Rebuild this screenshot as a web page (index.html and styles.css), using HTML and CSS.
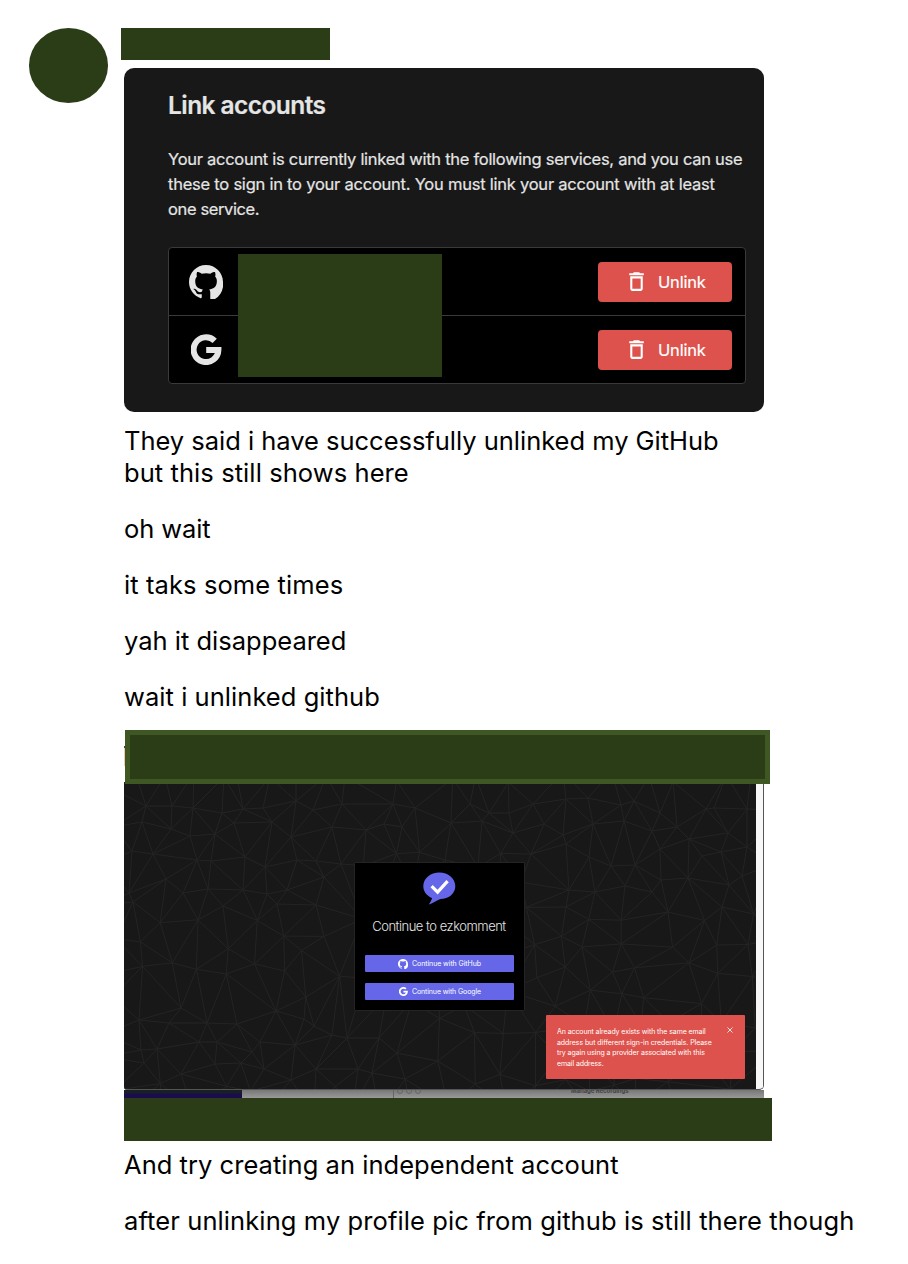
FILE: index.html
```html
<!DOCTYPE html>
<html lang="en">
<head>
<meta charset="utf-8">
<title>Conversation</title>
<link rel="stylesheet" href="styles.css">
</head>
<body>
<svg class="defs" width="0" height="0">
  <symbol id="github" viewBox="0 0 16 16"><path fill="currentColor" d="M8 0C3.58 0 0 3.58 0 8c0 3.54 2.29 6.53 5.47 7.59.4.07.55-.17.55-.38 0-.19-.01-.82-.01-1.49-2.01.37-2.53-.49-2.69-.94-.09-.23-.48-.94-.82-1.13-.28-.15-.68-.52-.01-.53.63-.01 1.08.58 1.23.82.72 1.21 1.87.87 2.33.66.07-.52.28-.87.51-1.07-1.78-.2-3.64-.89-3.64-3.95 0-.87.31-1.59.82-2.15-.08-.2-.36-1.02.08-2.12 0 0 .67-.21 2.2.82.64-.18 1.32-.27 2-.27s1.36.09 2 .27c1.53-1.04 2.2-.82 2.2-.82.44 1.1.16 1.92.08 2.12.51.56.82 1.27.82 2.15 0 3.07-1.87 3.75-3.65 3.95.29.25.54.73.54 1.48v3.900A8.01 8.01 0 0 0 16 8c0-4.42-3.58-8-8-8z"/></symbol>
  <symbol id="google" viewBox="0 0 31 31"><path fill="none" stroke="currentColor" stroke-width="6" d="M23.7 6.8A12.4 12.4 0 1 0 27.4 15.9H15.2"/></symbol>
  <symbol id="trash" viewBox="0 0 24 24"><path fill="currentColor" d="M6 19c0 1.1.9 2 2 2h8c1.1 0 2-.9 2-2V7H6v12zM8 9h8v10H8V9zm7.5-5l-1-1h-5l-1 1H5v2h14V4h-3.5z"/></symbol>
</svg>
<main class="thread">
  <div class="avatar"></div>
  <div class="messages">
    <div class="author"></div>
    <section class="link-card">
      <h2>Link accounts</h2>
      <p><span class="l1">Your account is currently linked with the following services, and you can use</span><br><span class="l2">these to sign in to your account. You must link your account with at least</span><br><span class="l3">one service.</span></p>
      <div class="services">
        <div class="service"><svg class="gh"><use href="#github"/></svg><button class="unlink"><svg><use href="#trash"/></svg>Unlink</button></div>
        <div class="service"><svg class="goo"><use href="#google"/></svg><button class="unlink"><svg><use href="#trash"/></svg>Unlink</button></div>
        <div class="redacted"></div>
      </div>
    </section>
    <div class="text">
      <p><span class="t1">They said i have successfully unlinked my GitHub</span><br><span class="t2">but this still shows here</span></p>
      <p><span class="t3">oh wait</span></p>
      <p><span class="t4">it taks some times</span></p>
      <p><span>yah it disappeared</span></p>
      <p><span class="t6">wait i unlinked github</span></p>
    </div>
    <section class="shot">
      <div class="topbar"></div>
      <div class="window">
        <div class="screen">
          <svg class="mesh" viewBox="124 783 632 307"><path id="mesh"/></svg>
          <div class="login">
            <svg class="logo" viewBox="0 0 33 33"><path fill="#6567e8" d="M16.3.5C25.2.5 32.3 6.500 32.3 14.200C32.3 21.500 25.500 27 17.500 27C13.500 28 10.500 31.500 5.800 32.500C7 30.500 8.600 28.500 9 26C4 24 .3 19.500.3 14.200C.3 6.500 7.400.5 16.300.5Z"/><path fill="none" stroke="#fff" stroke-width="3.200" d="M8.600 14.200L14.600 20.200L24.600 9.200"/></svg>
            <h3><span>Continue to ezkomment</span></h3>
            <button class="b1"><svg><use href="#github"/></svg><span>Continue with GitHub</span></button>
            <button class="b2"><svg class="g"><use href="#google"/></svg><span>Continue with Google</span></button>
          </div>
          <div class="toast">
            <p><span class="a1">An account already exists with the same email</span><br><span class="a2">address but different sign-in credentials. Please</span><br><span class="a3">try again using a provider associated with this</span><br><span class="a4">email address.</span></p>
            <svg class="close" viewBox="0 0 6 6"><path d="M.5.5L5.500 5.500M5.500.5L.5 5.500" stroke="#fff" stroke-width=".8"/></svg>
          </div>
        </div>
        <div class="scroll"></div>
      </div>
      <div class="behind"><div class="dock"></div><div class="sheet"><i></i><i></i><i></i><span>Manage Recordings</span></div></div>
      <div class="bottombar"></div>
    </section>
    <div class="text last">
      <p><span class="t7">And try creating an independent account</span></p>
      <p><span class="t8">after unlinking my profile pic from github is still there though</span></p>
    </div>
  </div>
</main>
<script src="mesh.js"></script>
</body>
</html>
```
FILE: styles.css
```css
* { box-sizing: border-box; }
body { margin: 0; background: #fff; color: #000; font-family: Inter, "Liberation Sans", sans-serif; }
p, h2, h3 { margin: 0; }
button { border: 0; padding: 0; font: inherit; color: #fff; }
span { white-space: nowrap; }
.defs { position: absolute; }
.thread { display: flex; height: 1264px; overflow: hidden; padding: 28px 0 0 29px; }
.avatar { width: 79px; height: 74.500px; border-radius: 50%; background: #2b3d17; }
.messages { margin-left: 16px; width: 760px; }
.author { width: 209px; height: 32px; margin-left: -3px; background: #2b3d17; }
.link-card { width: 640px; height: 344px; margin-top: 8px; padding: 22px 18px 0 44px; border-radius: 10px; background: #181818; color: #e5e5e5; }
.link-card h2 { font-size: 24.500px; line-height: 30px; font-weight: 600; letter-spacing: -.57px; -webkit-text-stroke: .2px; }
.link-card p { margin: 27px 0 25px; font-size: 16.500px; line-height: 25px; -webkit-text-stroke: .2px; }
.l1 { letter-spacing: -.28px; }
.l2 { letter-spacing: -.235px; }
.l3 { letter-spacing: -.38px; }
.services { position: relative; width: 578px; height: 137px; border: 1px solid #3a3a3a; border-radius: 4px; background: #000; }
.service { display: flex; align-items: center; justify-content: space-between; height: 67px; padding: 0 13px 0 20px; }
.service + .service { border-top: 1px solid #3a3a3a; height: 68px; padding-left: 22px; }
.gh { width: 34px; height: 34px; }
.goo { width: 31px; height: 31px; }
.redacted { position: absolute; left: 69px; top: 6px; width: 204px; height: 123px; background: #2b3d17; }
.unlink { display: flex; align-items: center; width: 134px; height: 40px; padding-left: 26px; border-radius: 4px; background: #dd524c; font-size: 16.500px; letter-spacing: -.2px; -webkit-text-stroke: .2px; }
.unlink svg { width: 25px; height: 25px; margin-right: 9px; }
.text { padding-top: 13px; height: 318px; font-size: 25.500px; line-height: 32px; }
.text p { margin-bottom: 24px; }
.t1 { letter-spacing: -.02px; }
.t2 { letter-spacing: .08px; }
.t3 { letter-spacing: -.1px; }
.t4 { letter-spacing: .1px; }
.t6 { letter-spacing: .05px; }
.t7 { letter-spacing: .04px; }
.t8 { letter-spacing: .1px; }
.shot { width: 648px; height: 411px; background: linear-gradient(#fff 16px, #443 16px 18px, #f3c9ae 18px 36px, #fff 36px 52px, #222 52px) 0 0 / 1px 54px no-repeat; }
.topbar { width: 645px; height: 54px; margin-left: 1px; border: 5px solid #3f5722; background: #2b3d17; }
.window { position: relative; z-index: 1; display: flex; width: 640px; height: 306px; border-bottom: 1px solid #555; border-radius: 0 0 5px 3px; overflow: hidden; background: #181818; }
.screen { position: relative; display: flex; justify-content: center; width: 632px; height: 306px; }
.mesh { position: absolute; inset: 0; width: 632px; height: 307px; }
.mesh path { fill: none; stroke: #242424; stroke-width: 1; }
.scroll { width: 8px; border-right: 1px solid #555; background: #f7f7f7; }
.login { position: relative; width: 171px; height: 149px; margin: 78px 2px 0 0; border: 1px solid #242424; background: #000; display: flex; flex-direction: column; align-items: center; color: #e5e5e5; border-radius: 1px; }
.logo { width: 33px; height: 33px; margin-top: 9px; flex: none; }
.login h3 { height: 20px; flex: none; margin: 11px 0 19px; font-size: 13px; line-height: 20px; font-weight: 300; letter-spacing: -.49px; }
.login button { display: flex; justify-content: center; align-items: center; gap: 4px; width: 149px; height: 17px; margin-bottom: 11px; background: #6567e8; border-radius: 1px; font-size: 7px; flex: none; }
.login button.b1 { padding-left: 1px; }
.login button.b2 { padding-left: 2px; }
.b1 span { letter-spacing: -.07px; }
.b2 span { letter-spacing: -.11px; }
.login button svg { width: 10px; height: 10px; }
.login button .g { width: 9px; height: 9px; }
.toast { position: absolute; left: 422px; top: 231px; width: 199px; height: 64px; padding: 12px 11px; border-radius: 1px; background: #dd524c; color: #fff; font-size: 7px; line-height: 10.700px; }
.a1 { letter-spacing: -.09px; }
.a2 { letter-spacing: -.07px; }
.a3 { letter-spacing: -.08px; }
.a4 { letter-spacing: -.1px; }
.close { position: absolute; right: 12px; top: 12px; width: 6px; height: 6px; }
.behind { display: flex; width: 640px; height: 8px; background: linear-gradient(#777, #999); }
.dock { width: 118px; background: linear-gradient(#182026 0 3px, #1b0d4d 4px); }
.sheet { display: flex; gap: 3px; width: 522px; padding-left: 155px; background: linear-gradient(#666, #666) 151px 0 / 1px 8px no-repeat; }
.sheet i { flex: none; width: 6px; height: 6px; margin-top: -2px; border: 1px solid #666; border-radius: 50%; }
.sheet span { margin: -3px 0 0 147px; font-size: 6px; line-height: 8px; font-weight: 700; letter-spacing: -.05px; color: #444; }
.bottombar { width: 648px; height: 43px; background: #2b3d17; }
.last { padding-top: 8px; height: 123px; }
```
FILE: mesh.js
```js
// Vertices of the low-poly backdrop; the remaining area is filled from a jittered grid.
const pts = [146,805,172,805,193,807,222,812,243,808,263,807,296,800,313,809,342,803,142,821,171,828,190,835,215,833,234,822,272,821,291,836,332,826,132,850,153,853,197,859,211,860,245,856,265,866,297,859,316,860,341,863,129,892,166,878,183,892,208,888,243,889,267,893,287,889,324,876,133,901,223,905,277,903,316,904,366,829,393,803,415,807,384,823,402,826,451,822,470,803,489,812,482,820,509,812,533,803,513,832,544,823,566,798,531,853,566,843,588,797,621,804,634,800,593,823,624,820,563,834,652,830,660,812,677,826,706,808,714,807,747,808,689,838,660,848,728,832,721,851,747,846,702,855,589,856,611,865,635,864,661,879,688,877,742,875,729,884,625,885,595,891,569,889,652,891,566,906,722,906,668,911,139,1019,169,1022,207,1022,237,1023,276,1010,304,1018,314,1025,141,1049,157,1048,199,1041,217,1041,260,1041,252,1051,295,1044,332,1034,347,1037,379,1037,397,1052,144,1062,181,1073,215,1063,241,1062,264,1068,316,1068,358,1068,372,1072,291,1079,405,1078,181,1007,136,774,165,775,194,772,224,776,236,770,270,776,296,776,326,775,345,775];
const P = [];
for (let i = 0; i < pts.length; i += 2) P.push([pts[i], pts[i + 1]]);
let seed = 7;
const rnd = () => (seed = (seed * 16807) % 2147483647) / 2147483647;
for (let y = 765; y < 1120; y += 28) for (let x = 100; x < 790; x += 28) {
  const a = x + rnd() * 18, b = y + rnd() * 18;
  if (P.every(p => Math.hypot(p[0] - a, p[1] - b) > 22)) P.push([a, b]);
}
// Incremental Delaunay triangulation.
const tri = (a, b, c) => {
  const [ax, ay] = a, [bx, by] = b, [cx, cy] = c;
  const d = 2 * (ax * (by - cy) + bx * (cy - ay) + cx * (ay - by));
  const A = ax * ax + ay * ay, B = bx * bx + by * by, C = cx * cx + cy * cy;
  const x = (A * (by - cy) + B * (cy - ay) + C * (ay - by)) / d;
  const y = (A * (cx - bx) + B * (ax - cx) + C * (bx - ax)) / d;
  return { v: [a, b, c], x, y, r: Math.hypot(ax - x, ay - y) };
};
let T = [tri([-5000, -5000], [6000, -5000], [500, 9000])];
for (const p of P) {
  const edges = [];
  T = T.filter(t => {
    if (Math.hypot(p[0] - t.x, p[1] - t.y) >= t.r) return true;
    const [a, b, c] = t.v;
    edges.push([a, b], [b, c], [c, a]);
    return false;
  });
  for (const e of edges)
    if (!edges.some(f => f !== e && f[0] === e[1] && f[1] === e[0])) T.push(tri(e[0], e[1], p));
}
let d = "";
const seen = new Set();
for (const t of T) for (let i = 0; i < 3; i++) {
  const ends = [t.v[i], t.v[(i + 1) % 3]].map(q => q.map(n => n.toFixed(1)).join(" ")).sort();
  const key = ends.join("L");
  if (!seen.has(key)) { seen.add(key); d += "M" + key; }
}
document.getElementById("mesh").setAttribute("d", d);
```
